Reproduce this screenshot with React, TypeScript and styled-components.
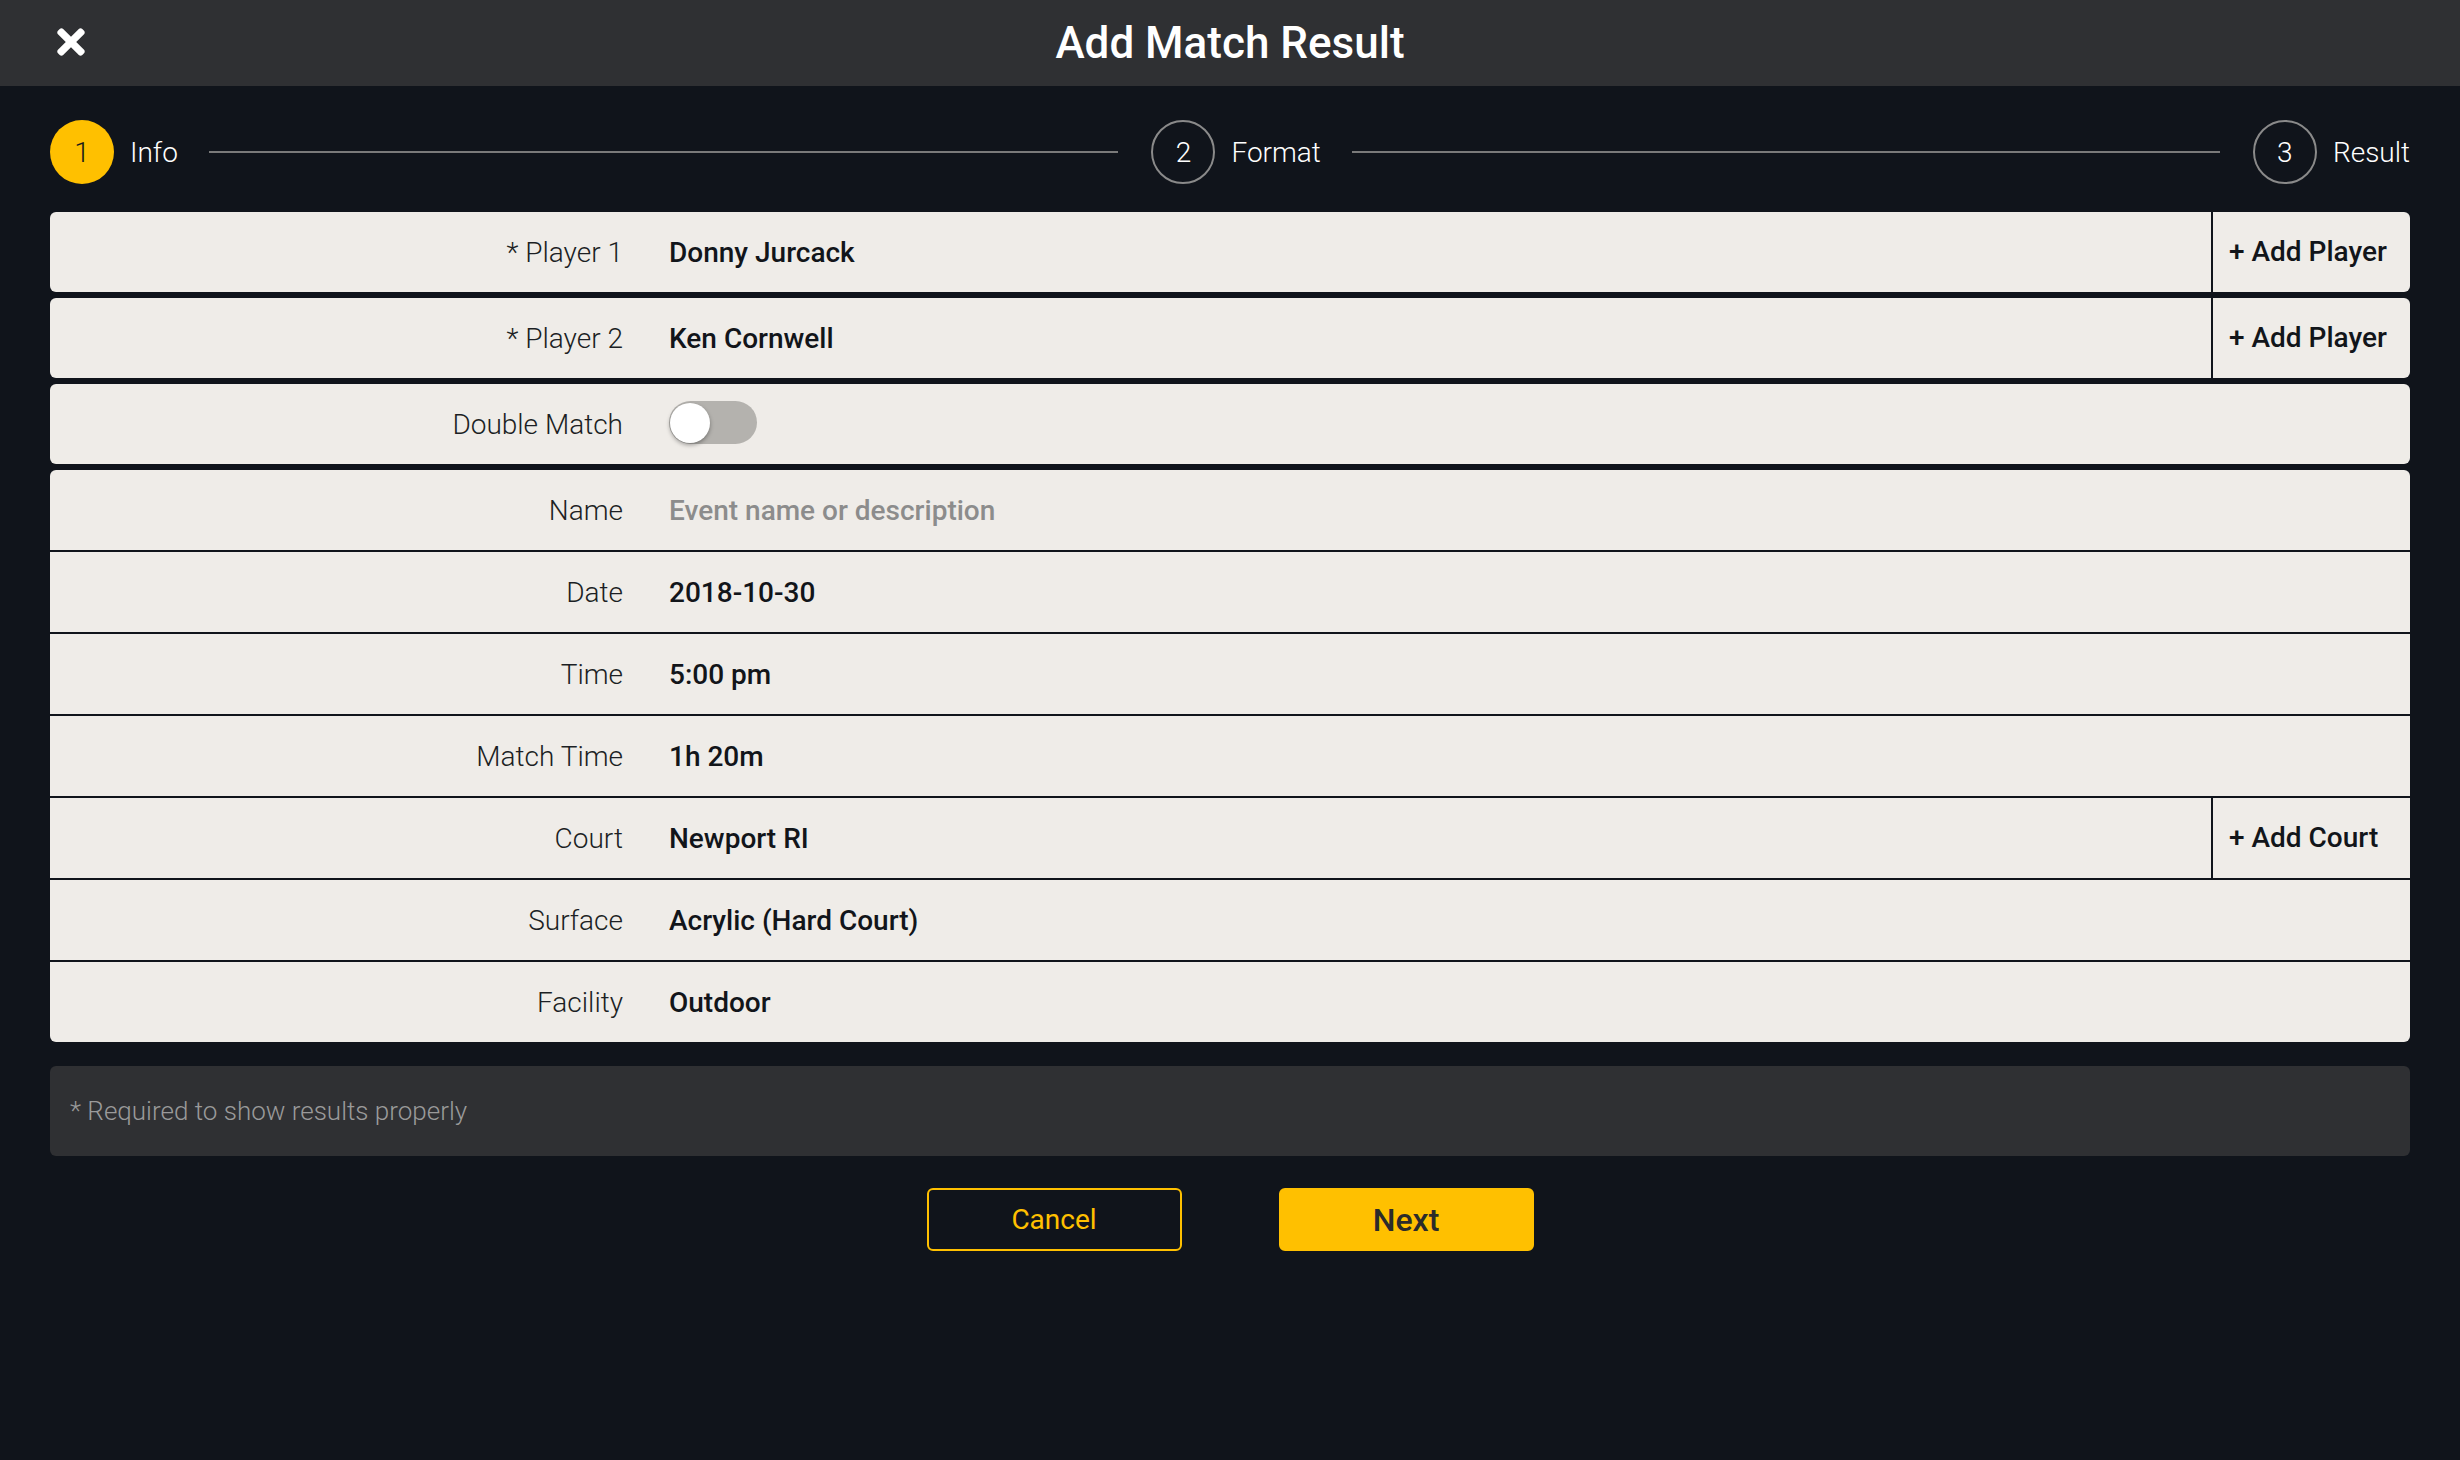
import React from "react";
import styled, { createGlobalStyle } from "styled-components";
import { FaTimes } from "react-icons/fa";

const GlobalStyle = createGlobalStyle`
  html, body { margin: 0; padding: 0; background: #10141b; }
  body { font-family: Roboto, "Liberation Sans", Arial, sans-serif; }
  * { box-sizing: border-box; }
`;

const Page = styled.div`
  min-height: 1460px;
  background: #10141b;
  color: #fff;
`;

const Header = styled.header`
  height: 86px;
  background: #2f3033;
  display: grid;
  grid-template-columns: 1fr auto 1fr;
  align-items: center;
`;

const CloseButton = styled.button`
  justify-self: start;
  margin-left: 51px;
  margin-top: -2px;
  background: none;
  border: none;
  padding: 0;
  color: #fff;
  display: flex;
  align-items: center;
  cursor: pointer;
`;

const Title = styled.h1`
  margin: 0;
  font-size: 44px;
  font-weight: 500;
  color: #fff;
`;

const Body = styled.main`
  padding: 34px 50px 0;
`;

const Stepper = styled.div`
  display: flex;
  align-items: center;
  height: 64px;
`;

const Step = styled.div<{ $last?: boolean }>`
  display: flex;
  align-items: center;
  flex: ${(p) => (p.$last ? "0 0 auto" : "1 1 0")};
  gap: 16px;
`;

const StepCircle = styled.div<{ $active?: boolean }>`
  width: 64px;
  height: 64px;
  flex-shrink: 0;
  border-radius: 50%;
  display: flex;
  align-items: center;
  justify-content: center;
  font-size: 28px;
  font-weight: 300;
  background: ${(p) => (p.$active ? "#ffc000" : "transparent")};
  color: ${(p) => (p.$active ? "#1a1a1a" : "#fff")};
  border: ${(p) => (p.$active ? "none" : "2px solid #8a8a8a")};
`;

const StepLabel = styled.span`
  font-size: 28px;
  font-weight: 300;
  color: #fff;
`;

const StepLine = styled.div`
  flex: 1;
  height: 2px;
  background: #7a7a7a;
  margin: 0 33px 0 15px;
`;

const Form = styled.div`
  margin-top: 28px;
  display: flex;
  flex-direction: column;
  gap: 6px;
`;

const Card = styled.div`
  background: #efece8;
  border-radius: 6px;
  overflow: hidden;
  display: flex;
  flex-direction: column;
`;

const Row = styled.div`
  display: flex;
  align-items: stretch;
  height: 80px;
  & + & {
    border-top: 2px solid #10141b;
    height: 82px;
  }
`;

const Label = styled.div`
  width: 573px;
  flex-shrink: 0;
  display: flex;
  align-items: center;
  justify-content: flex-end;
  font-size: 28px;
  font-weight: 300;
  color: #1c1f24;
`;

const Value = styled.div<{ $placeholder?: boolean }>`
  flex: 1;
  display: flex;
  align-items: center;
  padding-left: 46px;
  font-size: 28px;
  font-weight: 500;
  color: ${(p) => (p.$placeholder ? "#8c8c8c" : "#12151a")};
`;

const ActionButton = styled.button`
  width: 199px;
  flex-shrink: 0;
  border: none;
  border-left: 2px solid #10141b;
  background: transparent;
  padding: 0 0 2px 16px;
  text-align: left;
  font-family: inherit;
  font-size: 28px;
  font-weight: 500;
  color: #12151a;
  cursor: pointer;
`;

const Toggle = styled.div`
  width: 88px;
  height: 43px;
  margin-top: -3px;
  border-radius: 22px;
  background: #b4b2ae;
  padding: 1px;
  display: flex;
  align-items: center;
`;

const Knob = styled.div`
  width: 40px;
  height: 40px;
  border-radius: 50%;
  background: #fff;
  box-shadow: 0 2px 4px rgba(0, 0, 0, 0.35);
`;

const Note = styled.div`
  margin-top: 24px;
  height: 90px;
  background: #2f3033;
  border-radius: 6px;
  display: flex;
  align-items: center;
  padding-left: 20px;
  font-size: 26px;
  font-weight: 300;
  color: #9a9a9a;
`;

const Actions = styled.div`
  margin-top: 32px;
  display: flex;
  justify-content: center;
  gap: 97px;
`;

const Button = styled.button<{ $primary?: boolean }>`
  width: 255px;
  height: 63px;
  border-radius: 6px;
  font-family: inherit;
  cursor: pointer;
  border: 2px solid #ffc000;
  background: ${(p) => (p.$primary ? "#ffc000" : "transparent")};
  color: ${(p) => (p.$primary ? "#2b2b2b" : "#ffc000")};
  font-size: ${(p) => (p.$primary ? "32px" : "28px")};
  font-weight: ${(p) => (p.$primary ? 500 : 400)};
`;

type Field = { label: string; value: string; placeholder?: boolean; action?: string };

const details: Field[] = [
  { label: "Name", value: "Event name or description", placeholder: true },
  { label: "Date", value: "2018-10-30" },
  { label: "Time", value: "5:00 pm" },
  { label: "Match Time", value: "1h 20m" },
  { label: "Court", value: "Newport RI", action: "+ Add Court" },
  { label: "Surface", value: "Acrylic (Hard Court)" },
  { label: "Facility", value: "Outdoor" },
];

const steps = ["Info", "Format", "Result"];

export default function App() {
  return (
    <Page>
      <GlobalStyle />
      <Header>
        <CloseButton aria-label="Close">
          <FaTimes size={40} />
        </CloseButton>
        <Title>Add Match Result</Title>
        <div />
      </Header>
      <Body>
        <Stepper>
          {steps.map((s, i) => {
            const last = i === steps.length - 1;
            return (
              <Step key={s} $last={last}>
                <StepCircle $active={i === 0}>{i + 1}</StepCircle>
                <StepLabel>{s}</StepLabel>
                {!last && <StepLine />}
              </Step>
            );
          })}
        </Stepper>

        <Form>
          <Card>
            <Row>
              <Label>* Player 1</Label>
              <Value>Donny Jurcack</Value>
              <ActionButton>+ Add Player</ActionButton>
            </Row>
          </Card>
          <Card>
            <Row>
              <Label>* Player 2</Label>
              <Value>Ken Cornwell</Value>
              <ActionButton>+ Add Player</ActionButton>
            </Row>
          </Card>
          <Card>
            <Row>
              <Label>Double Match</Label>
              <Value>
                <Toggle>
                  <Knob />
                </Toggle>
              </Value>
            </Row>
          </Card>
          <Card>
            {details.map((f) => (
              <Row key={f.label}>
                <Label>{f.label}</Label>
                <Value $placeholder={f.placeholder}>{f.value}</Value>
                {f.action && <ActionButton>{f.action}</ActionButton>}
              </Row>
            ))}
          </Card>
        </Form>

        <Note>* Required to show results properly</Note>

        <Actions>
          <Button>Cancel</Button>
          <Button $primary>Next</Button>
        </Actions>
      </Body>
    </Page>
  );
}
